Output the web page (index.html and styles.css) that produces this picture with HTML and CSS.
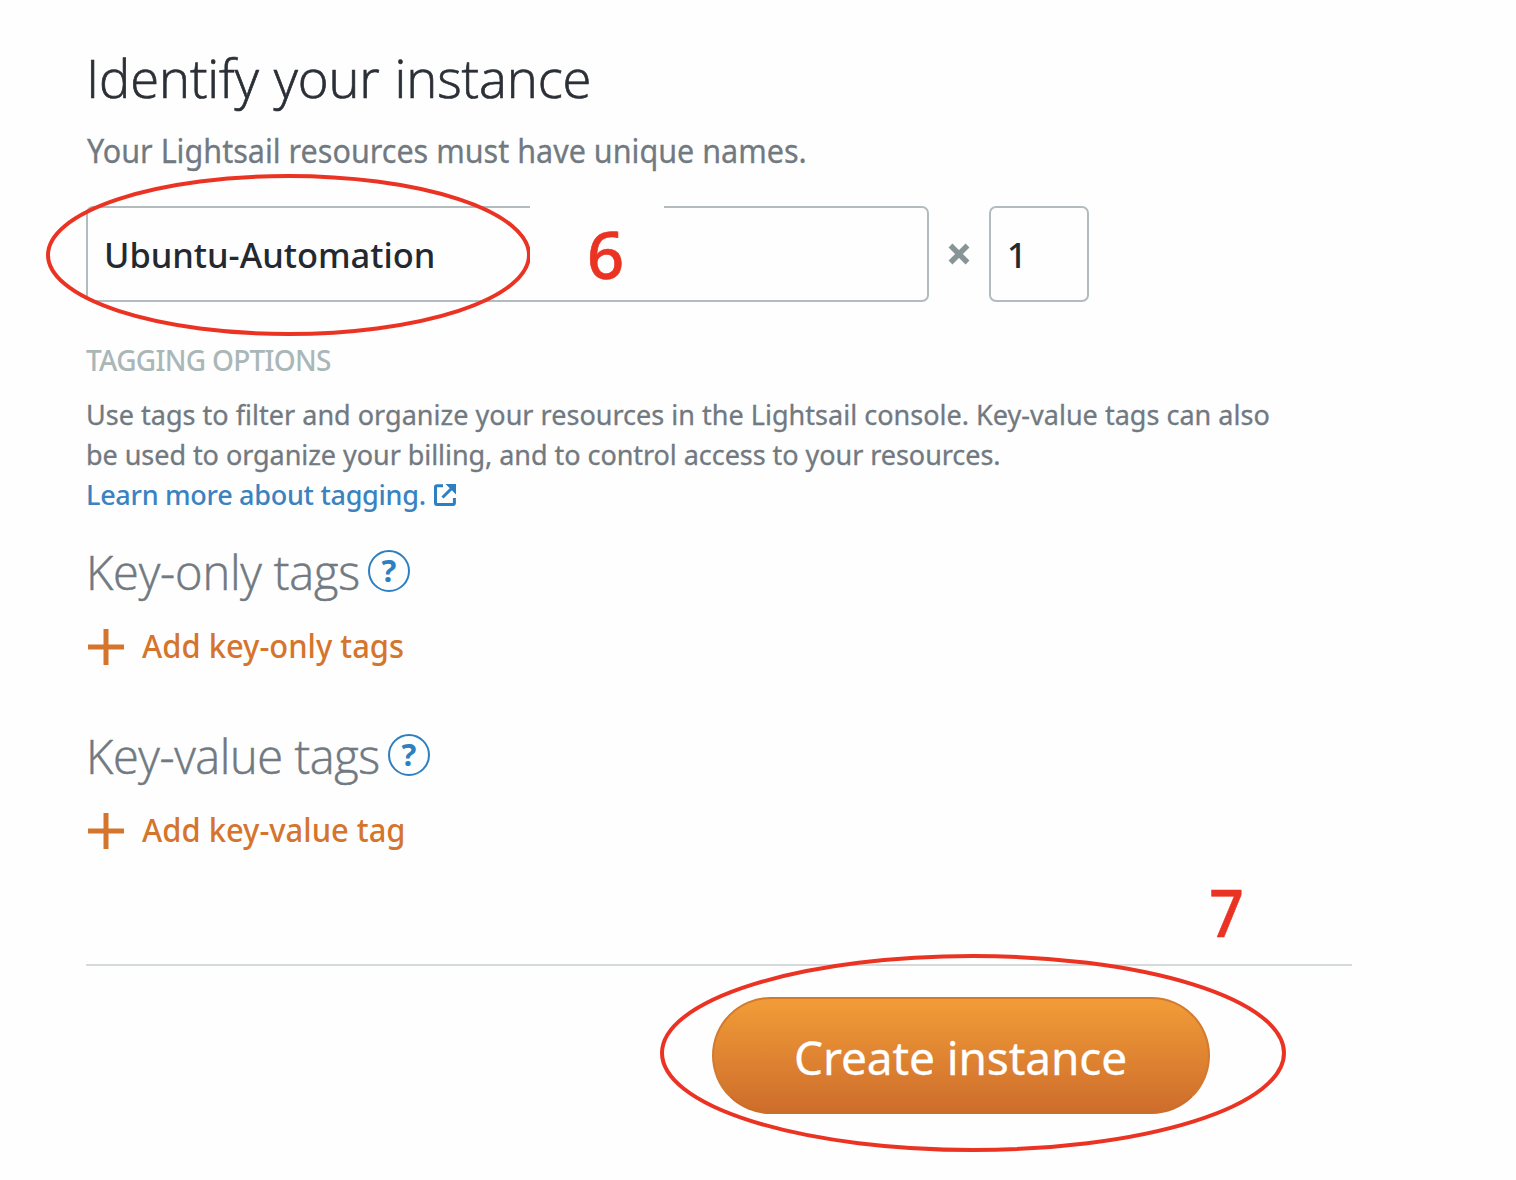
FILE: index.html
```html
<!DOCTYPE html>
<html lang="en">
<head>
<meta charset="utf-8">
<title>Create instance</title>
<link rel="stylesheet" href="styles.css">
</head>
<body>
<main class="page">
  <h1 class="title">Identify your instance</h1>
  <p class="subtitle">Your Lightsail resources must have unique names.</p>
  <div class="fields">
    <div class="field name-field"><span>Ubuntu-Automation</span></div>
    <svg class="times" width="24" height="24" viewBox="0 0 24 24"><path d="M3.5 3.5L20.5 20.5M20.5 3.5L3.5 20.5"/></svg>
    <div class="field count-field"><span>1</span></div>
  </div>

  <h2 class="label">TAGGING OPTIONS</h2>
  <p class="text">Use tags to filter and organize your resources in the Lightsail console. Key-value tags can also<br><span class="second">be used to organize your billing, and to control access to your resources.</span></p>
  <a class="link"><span>Learn more about tagging.</span>
    <svg width="24" height="24" viewBox="0 0 24 24"><path class="stroke" d="M10 2.7H4Q2.5 2.7 2.5 4V20Q2.5 21.4 4 21.4H20Q21.4 21.4 21.4 20V15M9.5 14.5L18.5 5.5"/><path class="fill" d="M12.5 1H23V11.5Z"/></svg>
  </a>

  <section class="tags">
    <h3 class="tags-title"><span>Key-only tags</span><i class="help">?</i></h3>
    <a class="add"><svg width="36" height="36" viewBox="0 0 36 36"><path d="M18 0V36M0 18H36"/></svg><span>Add key-only tags</span></a>
  </section>
  <section class="tags">
    <h3 class="tags-title value-title"><span>Key-value tags</span><i class="help">?</i></h3>
    <a class="add"><svg width="36" height="36" viewBox="0 0 36 36"><path d="M18 0V36M0 18H36"/></svg><span>Add key-value tag</span></a>
  </section>

  <footer class="actions"><div class="create">Create instance</div></footer>
</main>

<svg class="ring ring-name" width="484" height="164" viewBox="0 0 484 164"><ellipse cx="242.5" cy="82" rx="240.5" ry="79"/></svg>
<div class="patch"></div>
<svg class="ring ring-create" width="626" height="198" viewBox="0 0 626 198"><ellipse cx="313" cy="99" rx="311" ry="97"/></svg>
<div class="step step-six">6</div>
<div class="step step-seven">7</div>
</body>
</html>
```
FILE: styles.css
```css
* { box-sizing: border-box; }
body {
  margin: 0;
  width: 1516px;
  height: 1180px;
  overflow: hidden;
  position: relative;
  background: #fefefe;
  font-family: "Noto Sans", sans-serif;
  color: #717981;
}
h1, h2, h3, p { margin: 0; }
.page { padding: 46px 164px 0 84px; }

.title {
  font: 300 54px/62px "Open Sans", sans-serif;
  color: #2b2f36;
  -webkit-text-stroke: .7px;
  letter-spacing: -.15px;
  word-spacing: 1.5px;
  width: max-content;
  margin-left: 2px;
  transform: scaleX(.974);
  transform-origin: left;
}
.subtitle {
  margin: 22px 0 0 3px;
  font-size: 33px;
  line-height: 42px;
  width: max-content;
  -webkit-text-stroke: .3px;
  transform: scaleX(.925);
  transform-origin: left;
}
.fields { display: flex; align-items: center; margin: 34px 0 0 2px; }
.field {
  height: 96px;
  border: 2px solid #b2bcbe;
  border-radius: 7px;
  padding-left: 16px;
  font-size: 35px;
  font-weight: 500;
  line-height: 94px;
  color: #24292f;
}
.field span { display: inline-block; transform: scaleX(.983); transform-origin: left; }
.name-field { width: 843px; }
.count-field { width: 100px; }
.times { margin: 0 18px; fill: none; stroke: #879596; stroke-width: 5.5; }

.label {
  margin: 38px 0 0 2px;
  font-size: 28px;
  font-weight: 500;
  line-height: 40px;
  letter-spacing: -.7px;
  color: #aab7b8;
}
.text {
  margin: 15px 0 0 2px;
  font-size: 27px;
  line-height: 40px;
  letter-spacing: .02px;
  -webkit-text-stroke: .3px;
  white-space: nowrap;
}
.second { letter-spacing: -.05px; }
.link {
  display: flex;
  align-items: center;
  gap: 7px;
  height: 40px;
  margin-left: 2px;
  font-size: 27px;
  font-weight: 500;
  line-height: 40px;
  letter-spacing: -.28px;
  color: #3a83c0;
}
.stroke { fill: none; stroke: #2e7fc1; stroke-width: 3; }
.fill { fill: #2e7fc1; }

.tags { margin-top: 26px; height: 158px; }
.tags-title {
  display: flex;
  align-items: center;
  gap: 8px;
  height: 60px;
  margin-left: 2px;
  font: 300 47px/60px "Open Sans", sans-serif;
  letter-spacing: -.2px;
}
.tags-title span { padding-top: 2px; -webkit-text-stroke: .5px; }
.value-title { letter-spacing: -.42px; }
.help {
  width: 42px;
  height: 42px;
  border: 2px solid #2e7fc1;
  border-radius: 50%;
  font: 700 31px/37px "Noto Sans", sans-serif;
  letter-spacing: 0;
  text-align: center;
  color: #2e7fc1;
}
.add {
  display: flex;
  align-items: center;
  gap: 18px;
  margin: 23px 0 0 4px;
  height: 40px;
  font-size: 33px;
  font-weight: 500;
  line-height: 40px;
  color: #d5752d;
}
.add svg { margin-top: 6px; fill: none; stroke: #d5752d; stroke-width: 5; }
.add span { padding-top: 3px; transform: scaleX(.937); transform-origin: left; }

.actions {
  margin: 81px 0 0 2px;
  border-top: 2px solid #d5dbdb;
  padding: 31px 0 0 626px;
}
.create {
  width: 498px;
  height: 117px;
  border: 2px solid #d27a30;
  border-bottom-color: #cb6d2b;
  border-radius: 59px;
  background: linear-gradient(#f29d38, #cd6c2b);
  background-origin: border-box;
  padding-left: 80px;
  font-size: 46px;
  line-height: 116px;
  letter-spacing: -.1px;
  -webkit-text-stroke: .3px;
  color: #fff;
}

.patch { position: absolute; left: 530px; top: 178px; width: 134px; height: 118px; background: #fefefe; }
.ring { position: absolute; fill: none; stroke: #ea3323; stroke-width: 4; }
.ring-name { left: 46px; top: 173px; }
.ring-create { left: 660px; top: 954px; }
.step { position: absolute; font: 500 65px/78px "Noto Sans", sans-serif; color: #ea3323; -webkit-text-stroke: .6px; }
.step-six { left: 587px; top: 215px; }
.step-seven { left: 1208px; top: 873px; transform: scaleX(.93); }
```
